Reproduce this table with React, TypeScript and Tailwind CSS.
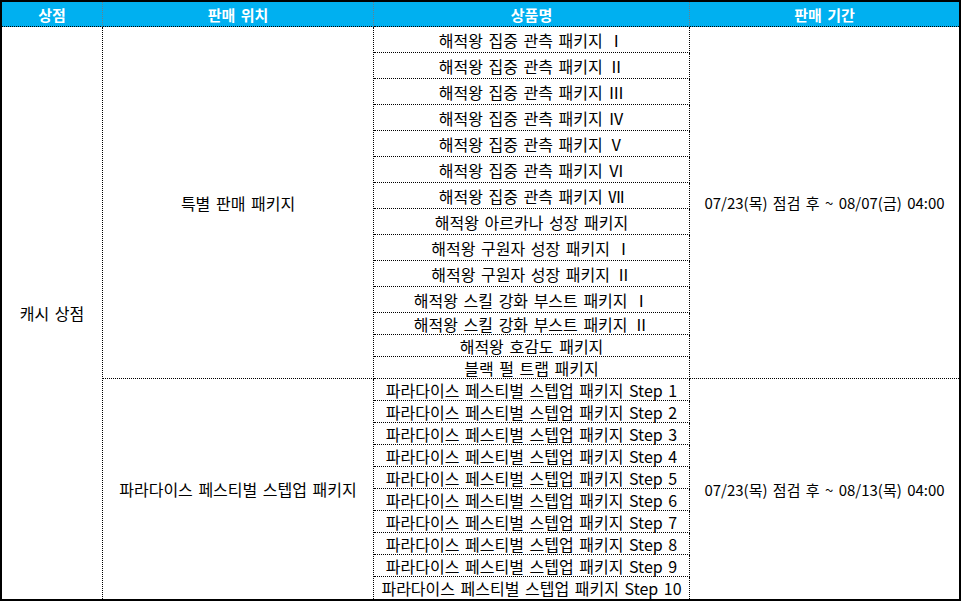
const FONT = { fontFamily: '"Noto Sans CJK KR", "Noto Sans", sans-serif' };

const specialItems = [
  "해적왕 집중 관측 패키지 Ⅰ",
  "해적왕 집중 관측 패키지 Ⅱ",
  "해적왕 집중 관측 패키지 Ⅲ",
  "해적왕 집중 관측 패키지 Ⅳ",
  "해적왕 집중 관측 패키지 Ⅴ",
  "해적왕 집중 관측 패키지 Ⅵ",
  "해적왕 집중 관측 패키지 Ⅶ",
  "해적왕 아르카나 성장 패키지",
  "해적왕 구원자 성장 패키지 Ⅰ",
  "해적왕 구원자 성장 패키지 Ⅱ",
  "해적왕 스킬 강화 부스트 패키지 Ⅰ",
  "해적왕 스킬 강화 부스트 패키지 Ⅱ",
  "해적왕 호감도 패키지",
  "블랙 펄 트랩 패키지",
];

const stepItems = Array.from(
  { length: 10 },
  (_, i) => `파라다이스 페스티벌 스텝업 패키지 Step ${i + 1}`
);

const cell =
  "flex items-center justify-center border-dotted border-black leading-none text-black whitespace-nowrap [word-spacing:2px]";

function HeaderCell({ label, last }: { label: string; last?: boolean }) {
  return (
    <div
      className={`flex items-center justify-center border-b border-dotted border-b-black bg-[#00B0F0] text-[15px] font-bold leading-none text-white [word-spacing:2px] ${
        last ? "" : "border-r border-r-[#6b7f88]"
      }`}
    >
      {label}
    </div>
  );
}

export default function App() {
  return (
    <div className="h-[601px] w-[961px] overflow-hidden bg-white" style={FONT}>
      <div className="border-2 border-black">
        <div className="grid grid-cols-[101px_271px_316px_269px] grid-rows-[25px_repeat(11,26px)_repeat(13,22px)]">
          <HeaderCell label="상점" />
          <HeaderCell label="판매 위치" />
          <HeaderCell label="상품명" />
          <HeaderCell label="판매 기간" last />

          <div className={`${cell} row-span-24 border-r text-[16px]`}>캐시 상점</div>

          <div className={`${cell} row-span-14 border-r border-b text-[16px]`}>특별 판매 패키지</div>
          <div className={`${cell} col-start-3 border-r border-b text-[16px]`}>{specialItems[0]}</div>
          <div className={`${cell} col-start-4 row-span-14 border-b text-[15px]`}>
            07/23(목) 점검 후 ~ 08/07(금) 04:00
          </div>
          {specialItems.slice(1).map((name) => (
            <div key={name} className={`${cell} col-start-3 border-r border-b text-[16px]`}>
              {name}
            </div>
          ))}

          <div className={`${cell} col-start-2 row-span-10 border-r text-[16px]`}>
            파라다이스 페스티벌 스텝업 패키지
          </div>
          <div className={`${cell} col-start-3 border-r border-b text-[16px]`}>{stepItems[0]}</div>
          <div className={`${cell} col-start-4 row-span-10 text-[15px]`}>
            07/23(목) 점검 후 ~ 08/13(목) 04:00
          </div>
          {stepItems.slice(1).map((name, i) => (
            <div
              key={name}
              className={`${cell} col-start-3 border-r text-[16px] ${
                i === stepItems.length - 2 ? "" : "border-b"
              }`}
            >
              {name}
            </div>
          ))}
        </div>
      </div>
    </div>
  );
}
